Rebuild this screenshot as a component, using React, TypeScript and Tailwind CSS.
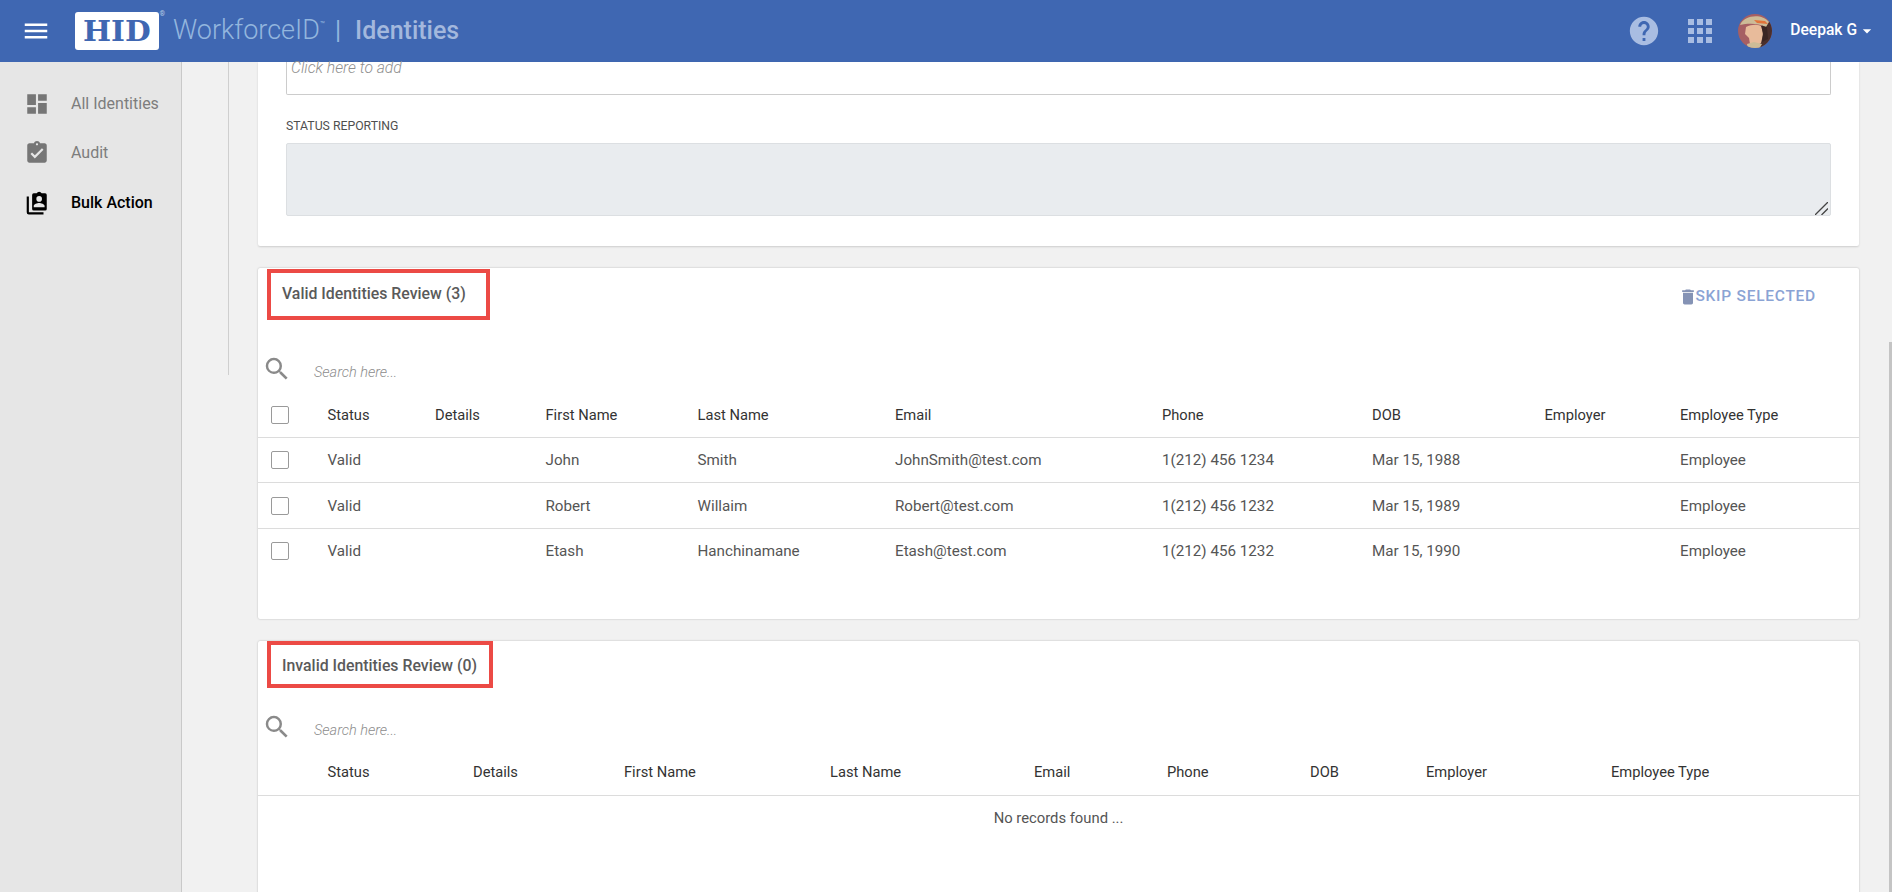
import React from "react";
import { MdMenu, MdDashboard, MdAssignmentTurnedIn, MdHelp, MdApps, MdSearch, MdDelete, MdArrowDropDown } from "react-icons/md";

const validCols = "grid grid-cols-[69.5px_107.5px_110.5px_152px_197.5px_267px_210px_172.5px_135.5px_1fr] items-center";
const invalidCols = "grid grid-cols-[69.5px_145.5px_151px_206px_204px_133px_143px_116px_185px_1fr] items-center";

const validHead = ["Status", "Details", "First Name", "Last Name", "Email", "Phone", "DOB", "Employer", "Employee Type"];
const rows = [
  ["Valid", "", "John", "Smith", "JohnSmith@test.com", "1(212) 456 1234", "Mar 15, 1988", "", "Employee"],
  ["Valid", "", "Robert", "Willaim", "Robert@test.com", "1(212) 456 1232", "Mar 15, 1989", "", "Employee"],
  ["Valid", "", "Etash", "Hanchinamane", "Etash@test.com", "1(212) 456 1232", "Mar 15, 1990", "", "Employee"],
];

function Checkbox() {
  return <span className="ml-[13px] block h-[18px] w-[18px] rounded-[2px] border border-[#9a9a9a] bg-white" />;
}

function SearchRow({ className }: { className: string }) {
  return (
    <div className={className}>
      <MdSearch className="ml-[4px] h-[30px] w-[30px] shrink-0 text-[#8a8a8a] -translate-y-[2px]" />
      <span className="ml-[22px] translate-y-[2px] text-[14.5px] italic font-light text-[#8d8d8d]">Search here...</span>
    </div>
  );
}

function BulkIcon() {
  return (
    <svg viewBox="0 0 24 24" className="h-[26px] w-[26px] shrink-0" fill="none">
      <path d="M3.5 6v14.5a1 1 0 0 0 1 1H18" stroke="#000" strokeWidth="2" />
      <path fillRule="evenodd" clipRule="evenodd" d="M8.5 3h3.2a2.6 2.6 0 0 1 4.6 0h3.2a1.5 1.5 0 0 1 1.5 1.5v13a1.5 1.5 0 0 1-1.5 1.5h-10.5a1.5 1.5 0 0 1-1.5-1.5v-13a1.5 1.5 0 0 1 1.5-1.5zM14 5.6a2.6 2.6 0 1 0 0 5.2 2.6 2.6 0 0 0 0-5.2zM9 16h10v-1.2c0-1.8-3.3-2.8-5-2.8s-5 1-5 2.8z" fill="#000" />
    </svg>
  );
}

function Avatar() {
  return (
    <svg viewBox="0 0 34 34" className="h-[34px] w-[34px] shrink-0">
      <defs>
        <clipPath id="av"><circle cx="17" cy="17" r="17" /></clipPath>
      </defs>
      <g clipPath="url(#av)">
        <rect width="34" height="34" fill="#a65f63" />
        <path d="M24 8h10v26H22z" fill="#4a2f2c" />
        <path d="M2 11C6 1 24-1 31 8l-3 5C20 9 10 9 2 11z" fill="#cdbb97" />
        <path d="M16 6l11 1 3 3-11-1z" fill="#e2733a" />
        <path d="M8 13c6-3 13-3 16 0l1 8-2 8-7 4-4-3-1-6-4-4z" fill="#e8bb9b" />
        <path d="M9 30l7-2 8 2-3 5H10z" fill="#cdbb97" />
        <path d="M23 12l6 1 1 12-6 3 1-9z" fill="#3a2523" />
      </g>
    </svg>
  );
}

export default function App() {
  return (
    <div className="flex h-screen w-full flex-col overflow-hidden bg-[#f1f1f1] [font-family:Roboto,sans-serif] text-[15.2px] text-[#555]">
      <header className="flex h-[62px] shrink-0 items-center bg-[#3f67b2]">
        <MdMenu className="ml-[21px] h-[30px] w-[30px] text-white" />
        <div className="relative ml-[24px] flex h-[38px] w-[84px] items-center justify-center rounded-[3px] bg-white">
          <span className="inline-block scale-x-[1.1] [font-family:DejaVu_Serif,serif] text-[27px] font-bold leading-none text-[#3f67b2]">HID</span>
          <span className="absolute -right-[6px] -top-[1px] text-[7px] leading-none text-[#b9cbe6]">®</span>
        </div>
        <span className="ml-[14px] -translate-y-[1px] text-[27px] font-light leading-none text-[#93b6de]">WorkforceID</span>
        <span className="mb-[12px] text-[8px] leading-none text-[#93b6de]">™</span>
        <span className="ml-[10px] -translate-y-[1px] text-[25px] leading-none text-[#93b6de]">|</span>
        <span className="ml-[14px] -translate-y-[1px] text-[25px] font-medium leading-none text-[#a3b8dd]">Identities</span>
        <div className="ml-auto flex items-center">
          <MdHelp className="h-[34px] w-[34px] text-[#a9bde2]" />
          <MdApps className="ml-[21px] h-[36px] w-[36px] text-[#a9bde2]" />
          <div className="ml-[20px]"><Avatar /></div>
          <span className="ml-[18px] text-[15.6px] font-medium text-white">Deepak G</span>
          <MdArrowDropDown className="mr-[15px] h-[20px] w-[20px] text-white" />
        </div>
      </header>

      <div className="flex min-h-0 flex-1">
        <aside className="w-[182px] shrink-0 border-r border-[#c9c9c9] bg-[#e6e6e6] pt-[17px] text-[16px]">
          <div className="flex h-[49px] items-center pl-[24px] text-[#7d7d7d]">
            <MdDashboard className="h-[26px] w-[26px] text-[#767676]" />
            <span className="ml-[21px]">All Identities</span>
          </div>
          <div className="flex h-[50px] items-center pl-[24px] text-[#7d7d7d]">
            <MdAssignmentTurnedIn className="h-[26px] w-[26px] text-[#767676]" />
            <span className="ml-[21px]">Audit</span>
          </div>
          <div className="flex h-[50px] items-center pl-[24px] text-black">
            <BulkIcon />
            <span className="ml-[21px] font-medium">Bulk Action</span>
          </div>
        </aside>

        <div className="w-[47px] shrink-0">
          <div className="h-[313px] border-r border-[#cfcfcf]" />
        </div>

        <main className="min-w-0 flex-1 pl-[29px] pr-[30px]">
          <section className="h-[184px] rounded-b-[2px] bg-white pl-[28px] pr-[28px] shadow-[0_1px_2px_rgba(0,0,0,0.15)]">
            <div className="h-[33px] rounded-b-[2px] border border-t-0 border-[#ccc] pl-[4px] text-[15.7px] italic font-light leading-[12px] text-[#8f8f8f]">Click here to add</div>
            <div className="mt-[24px] text-[12.25px] leading-[14px] text-[#4f4f4f]">STATUS REPORTING</div>
            <div className="relative mt-[10px] h-[73px]">
              <textarea readOnly className="block h-full w-full resize-none rounded-[2px] border border-[#dcdfe2] bg-[#e9ecef] outline-none" />
              <svg viewBox="0 0 12 12" className="absolute bottom-[1px] right-[3px] h-[13px] w-[13px]" stroke="#444" strokeWidth="1.2" fill="none">
                <path d="M0 12 12 0M6 12l6-6" />
              </svg>
            </div>
          </section>

          <section className="mt-[22px] h-[351px] rounded-[2px] bg-white shadow-[0_0_2px_rgba(0,0,0,0.25)]">
            <div className="flex items-start justify-between">
              <div className="ml-[9px] mt-[1px] flex h-[51px] w-[223px] items-center border-4 border-[#ec4a45] pb-[2px] pl-[11px] text-[15.85px] font-medium text-[#5a5a5a]">
                Valid Identities Review (3)
              </div>
              <div className="mr-[43px] mt-[17px] flex items-center text-[15.5px] font-medium tracking-[0.75px] text-[#8aa3d4]">
                <MdDelete className="h-[20px] w-[20px] -mr-[3px] text-[#8593b5]" />
                <span>SKIP SELECTED</span>
              </div>
            </div>
            <SearchRow className="mt-[30px] flex h-[42px] items-center" />
            <div className={`${validCols} h-[46px] border-b border-[#dcdcdc] pt-[1px] text-[14.7px] text-[#333]`}>
              <Checkbox />
              {validHead.map((h) => <span key={h}>{h}</span>)}
            </div>
            {rows.map((r, i) => (
              <div key={i} className={`${validCols} ${i === 0 ? "h-[45px] border-b border-[#dcdcdc]" : i === 1 ? "h-[46px] border-b border-[#dcdcdc] pt-[1px]" : "h-[44px]"}`}>
                <Checkbox />
                {r.map((c, j) => <span key={j}>{c}</span>)}
              </div>
            ))}
          </section>

          <section className="mt-[22px] h-[400px] rounded-[2px] bg-white shadow-[0_0_2px_rgba(0,0,0,0.25)]">
            <div className="ml-[9px] mt-[1px] flex h-[47px] w-[226px] items-center border-4 border-[#ec4a45] pl-[11px] pt-[2px] text-[15.85px] font-medium text-[#5a5a5a]">
              Invalid Identities Review (0)
            </div>
            <SearchRow className="mt-[20px] flex h-[42px] items-center" />
            <div className={`${invalidCols} h-[46px] border-b border-[#dcdcdc] text-[14.7px] text-[#333]`}>
              <span />
              {validHead.map((h) => <span key={h}>{h}</span>)}
            </div>
            <div className="flex h-[44px] items-center justify-center text-[14.8px] text-[#555]">No records found ...</div>
          </section>
        </main>

        <div className="w-[3px] shrink-0 pt-[280px]">
          <div className="h-full bg-[#c4c4c4]" />
        </div>
      </div>
    </div>
  );
}
